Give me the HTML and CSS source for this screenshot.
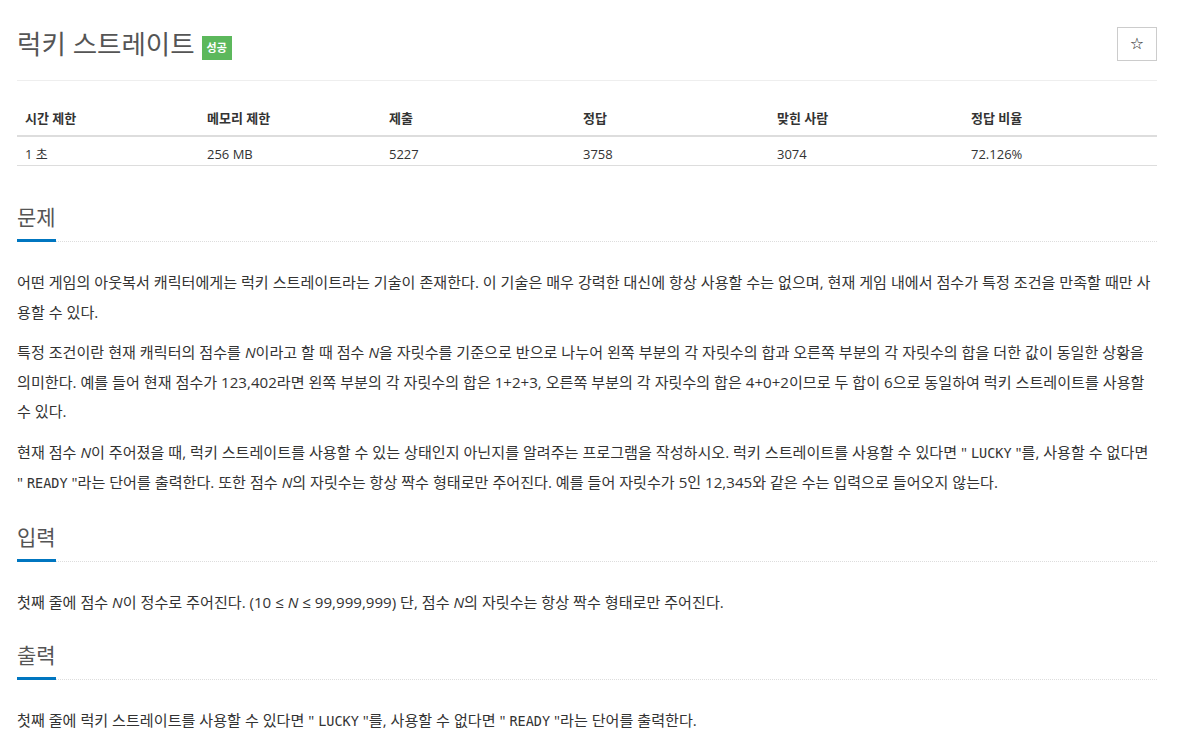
FILE: index.html
```html
<!DOCTYPE html>
<html lang="ko">
<head>
<meta charset="utf-8">
<link rel="stylesheet" href="styles.css">
</head>
<body>
<div class="page">
  <div class="title-row">
    <h1 class="title">럭키 스트레이트 <span class="badge">성공</span></h1>
    <button class="star-btn" type="button">☆</button>
  </div>
  <table class="info">
    <thead>
      <tr><th>시간 제한</th><th>메모리 제한</th><th>제출</th><th>정답</th><th>맞힌 사람</th><th>정답 비율</th></tr>
    </thead>
    <tbody>
      <tr><td>1 초</td><td>256 MB</td><td>5227</td><td>3758</td><td>3074</td><td>72.126%</td></tr>
    </tbody>
  </table>

  <section class="sec first">
    <div class="headline"><h2>문제</h2></div>
    <p>어떤 게임의 아웃복서 캐릭터에게는 럭키 스트레이트라는 기술이 존재한다. 이 기술은 매우 강력한 대신에 항상 사용할 수는 없으며, 현재 게임 내에서 점수가 특정 조건을 만족할 때만 사용할 수 있다.</p>
    <p>특정 조건이란 현재 캐릭터의 점수를 <i>N</i>이라고 할 때 점수 <i>N</i>을 자릿수를 기준으로 반으로 나누어 왼쪽 부분의 각 자릿수의 합과 오른쪽 부분의 각 자릿수의 합을 더한 값이 동일한 상황을 의미한다. 예를 들어 현재 점수가 123,402라면 왼쪽 부분의 각 자릿수의 합은 1+2+3, 오른쪽 부분의 각 자릿수의 합은 4+0+2이므로 두 합이 6으로 동일하여 럭키 스트레이트를 사용할 수 있다.</p>
    <p>현재 점수 <i>N</i>이 주어졌을 때, 럭키 스트레이트를 사용할 수 있는 상태인지 아닌지를 알려주는 프로그램을 작성하시오. 럭키 스트레이트를 사용할 수 있다면 <span class="nw">" <code>LUCKY</code> "를,</span> 사용할 수 없다면 <span class="nw">" <code>READY</code> "라는</span> 단어를 출력한다. 또한 점수 <i>N</i>의 자릿수는 항상 짝수 형태로만 주어진다. 예를 들어 자릿수가 5인 12,345와 같은 수는 입력으로 들어오지 않는다.</p>
  </section>

  <section class="sec">
    <div class="headline"><h2>입력</h2></div>
    <p>첫째 줄에 점수 <i>N</i>이 정수로 주어진다. (10 ≤ <i>N</i> ≤ 99,999,999) 단, 점수 <i>N</i>의 자릿수는 항상 짝수 형태로만 주어진다.</p>
  </section>

  <section class="sec">
    <div class="headline"><h2>출력</h2></div>
    <p>첫째 줄에 럭키 스트레이트를 사용할 수 있다면 " <code>LUCKY</code> "를, 사용할 수 없다면 " <code>READY</code> "라는 단어를 출력한다.</p>
  </section>
</div>
</body>
</html>
```

FILE: styles.css
```css
* { box-sizing: border-box; }
body {
  margin: 0;
  background: #fff;
  font-family: "Open Sans", "Noto Sans CJK KR", sans-serif;
  color: #333;
}
.page {
  width: 1140px;
  margin-left: 17px;
}
.title-row {
  display: flex;
  justify-content: space-between;
  align-items: flex-start;
  padding-top: 27px;
  padding-bottom: 19px;
  border-bottom: 1px solid #eee;
}
.title {
  margin: 0;
  font-size: 26.5px;
  font-weight: 400;
  color: #555;
  line-height: 34px;
  display: flex;
  align-items: center;
  gap: 7px;
}
.badge {
  display: inline-block;
  background: #5cb85c;
  color: #fff;
  font-size: 11px;
  font-weight: 700;
  line-height: 24px;
  height: 24px;
  padding: 0 5px;
  margin-top: 8px;
}
.star-btn {
  width: 40px;
  height: 34px;
  border: 1px solid #ccc;
  background: #fff;
  font-size: 16px;
  color: #222;
  padding: 0;
  line-height: 32px;
  font-family: "DejaVu Sans", sans-serif;
}
.info {
  width: 1140px;
  margin-top: 20px;
  border-collapse: collapse;
  table-layout: fixed;
  font-size: 13px;
}
.info th:nth-child(1), .info th:nth-child(2) { width: 182px; }
.info th:nth-child(3), .info th:nth-child(4), .info th:nth-child(5), .info th:nth-child(6) { width: 194px; }
.info th {
  text-align: left;
  font-weight: 700;
  padding: 8px;
  line-height: 18px;
  border-bottom: 2px solid #ddd;
  color: #333;
}
.info td {
  padding: 8px 8px 2px;
  line-height: 18px;
  border-bottom: 1px solid #ddd;
  color: #333;
}
.sec.first { margin-top: 35px; }
.headline {
  border-bottom: 1px dotted #ddd;
  margin-bottom: 26px;
}
.headline h2 {
  display: inline-block;
  margin: 0;
  font-size: 21px;
  font-weight: 400;
  color: #555;
  line-height: 32px;
  padding-bottom: 6px;
  border-bottom: 3px solid #0076c0;
  margin-bottom: -1px;
}
p {
  margin: 0 0 11px;
  font-size: 15.1px;
  line-height: 29.5px;
  color: #333;
}
.sec p:last-child { margin-bottom: 22px; }
i { font-style: italic; }
.nw { white-space: nowrap; }
code {
  font-family: "DejaVu Sans Mono", monospace;
  font-size: 13.5px;
}
```
